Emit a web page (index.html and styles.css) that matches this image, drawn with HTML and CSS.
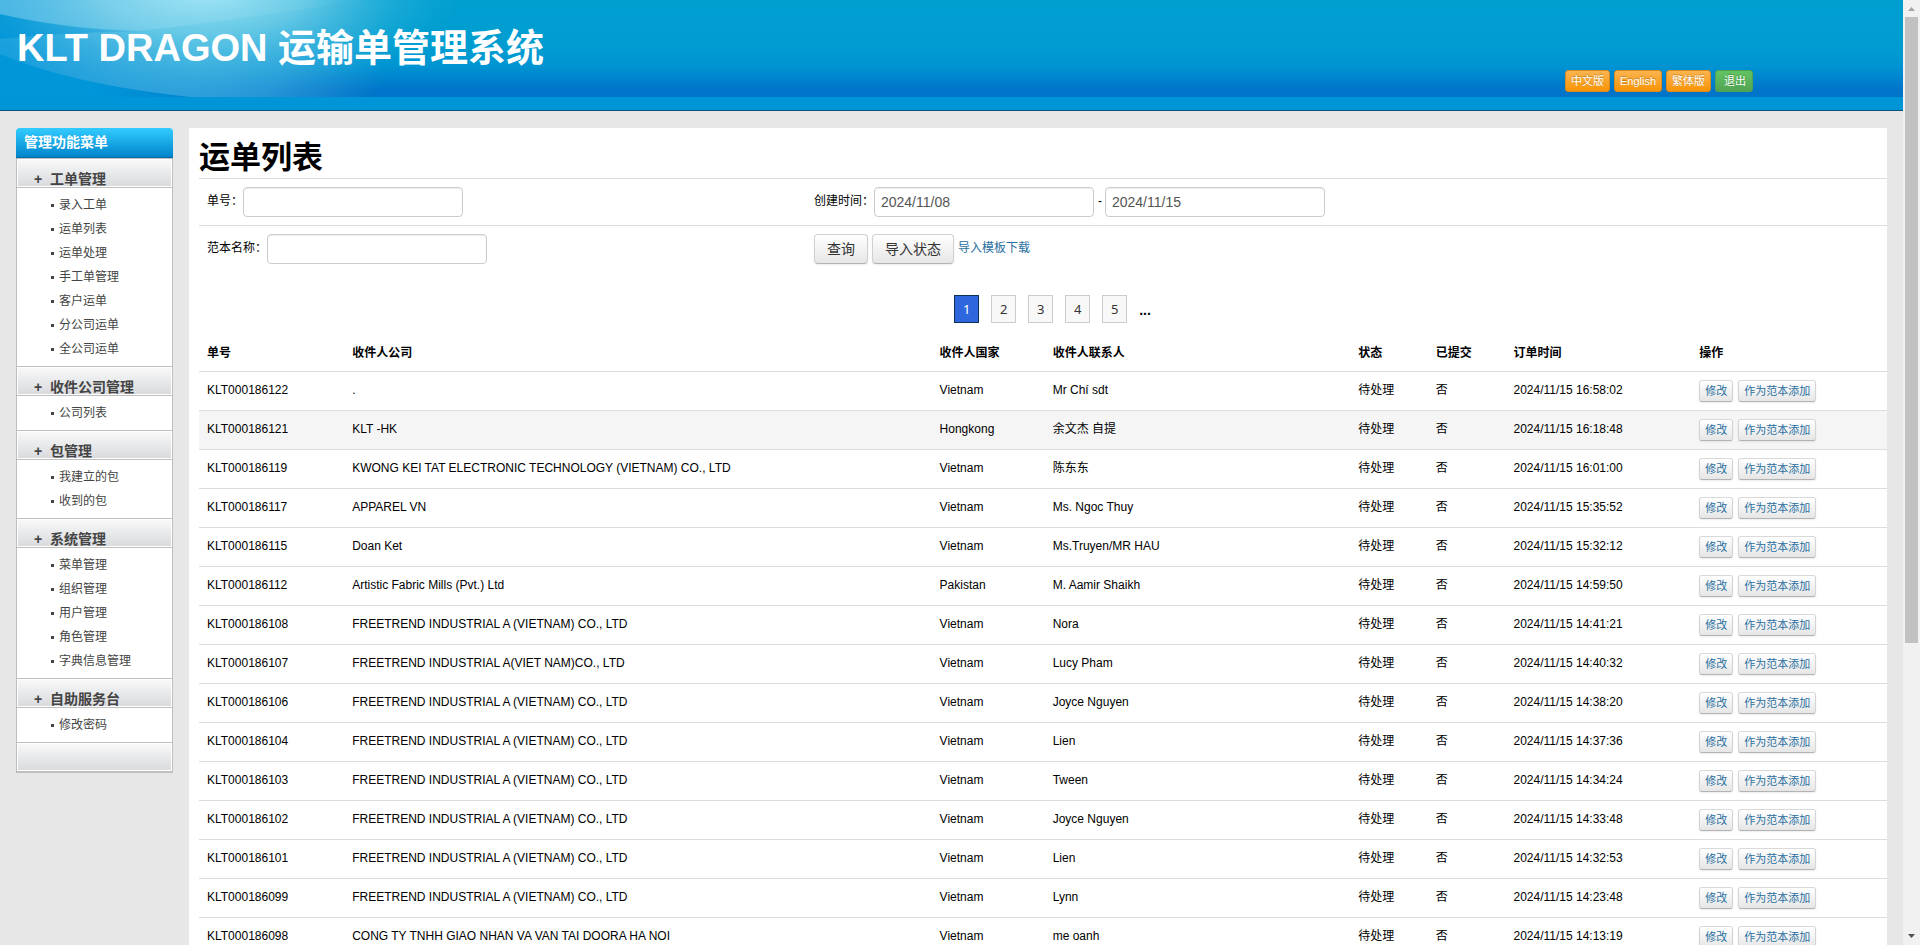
FILE: index.html
```
<!DOCTYPE html>
<html lang="zh-CN">
<head>
<meta charset="utf-8">
<title>KLT DRAGON 运输单管理系统</title>
<link rel="stylesheet" href="styles.css">
</head>
<body>
<div class="viewport">
<div class="page">
  <header class="header">
    <svg class="header-art" width="480" height="97" viewBox="0 0 480 97" aria-hidden="true">
      <defs>
        <linearGradient id="left" x1="0" y1="0" x2="1" y2="0">
          <stop offset="0" stop-color="#0096d8"/><stop offset=".3" stop-color="#0096d8"/><stop offset="1" stop-color="#0096d8" stop-opacity="0"/>
        </linearGradient>
        <radialGradient id="glow" gradientUnits="userSpaceOnUse" cx="0" cy="0" r="1" gradientTransform="translate(205 -8) scale(255 100)">
          <stop offset="0" stop-color="#a4e8f6" stop-opacity=".95"/><stop offset=".4" stop-color="#7cd6ea" stop-opacity=".75"/><stop offset="1" stop-color="#30b4dc" stop-opacity="0"/>
        </radialGradient>
        <radialGradient id="wash" gradientUnits="userSpaceOnUse" cx="0" cy="0" r="1" gradientTransform="translate(200 50) scale(190 120)">
          <stop offset="0" stop-color="#40b0de" stop-opacity=".8"/><stop offset=".5" stop-color="#38a4dc" stop-opacity=".6"/><stop offset="1" stop-color="#38a4dc" stop-opacity="0"/>
        </radialGradient>
        <linearGradient id="upper" x1="0" y1="0" x2="1" y2="0">
          <stop offset="0" stop-color="#a8dcf4" stop-opacity=".4"/><stop offset="1" stop-color="#c8f4fc" stop-opacity="0"/>
        </linearGradient>
        <linearGradient id="edge" x1="0" y1="0" x2="1" y2="0">
          <stop offset="0" stop-color="#60bcea" stop-opacity=".25"/><stop offset="1" stop-color="#60bcea" stop-opacity="0"/>
        </linearGradient>
      </defs>
      <rect width="300" height="97" fill="url(#left)"/>
      <path d="M0 0H480V97H190Q70 84 0 54Z" fill="url(#wash)"/>
      <path d="M0 39Q70 32 138 31H380V97H190Q70 84 0 54Z" fill="url(#edge)"/>
      <rect width="480" height="97" fill="url(#glow)"/>
      <path d="M0 14Q70 31 138 31Q70 32 0 39Z" fill="#008fd8" fill-opacity=".25"/>
      <path d="M0 0H360Q240 20 138 31Q60 28 0 14Z" fill="url(#upper)"/>
    </svg>
    <h1 class="brand">KLT DRAGON 运输单管理系统</h1>
    <nav class="top-actions">
      <a class="mini mini-warning" href="#">中文版</a>
      <a class="mini mini-warning" href="#">English</a>
      <a class="mini mini-warning" href="#">繁体版</a>
      <a class="mini mini-success" href="#">退出</a>
    </nav>
  </header>

  <div class="body">
    <aside class="sidebar">
      <h2 class="menu-title">管理功能菜单</h2>
      <section class="group"><h3 class="group-head"><span class="plus">+</span>工单管理</h3>
        <ul class="items"><li><a href="#">录入工单</a></li><li><a href="#">运单列表</a></li><li><a href="#">运单处理</a></li><li><a href="#">手工单管理</a></li><li><a href="#">客户运单</a></li><li><a href="#">分公司运单</a></li><li><a href="#">全公司运单</a></li></ul></section>
      <section class="group"><h3 class="group-head"><span class="plus">+</span>收件公司管理</h3>
        <ul class="items"><li><a href="#">公司列表</a></li></ul></section>
      <section class="group"><h3 class="group-head"><span class="plus">+</span>包管理</h3>
        <ul class="items"><li><a href="#">我建立的包</a></li><li><a href="#">收到的包</a></li></ul></section>
      <section class="group"><h3 class="group-head"><span class="plus">+</span>系统管理</h3>
        <ul class="items"><li><a href="#">菜单管理</a></li><li><a href="#">组织管理</a></li><li><a href="#">用户管理</a></li><li><a href="#">角色管理</a></li><li><a href="#">字典信息管理</a></li></ul></section>
      <section class="group"><h3 class="group-head"><span class="plus">+</span>自助服务台</h3>
        <ul class="items"><li><a href="#">修改密码</a></li></ul></section>
      <div class="group group-last"><div class="group-head"></div></div>
    </aside>

    <main class="content">
      <h2 class="title">运单列表</h2>
      <form class="filters">
        <div class="filter-row">
          <div class="field"><label for="no">单号：</label><input id="no" type="text"></div>
          <div class="field"><label for="from">创建时间：</label><input id="from" type="text" value="2024/11/08"><label class="dash" for="to">-</label><input id="to" type="text" value="2024/11/15"></div>
        </div>
        <div class="filter-row">
          <div class="field"><label for="tpl">范本名称：</label><input id="tpl" type="text"></div>
          <div class="field actions"><button class="btn" type="button">查询</button><button class="btn" type="button">导入状态</button><a class="link" href="#">导入模板下载</a></div>
        </div>
      </form>
      <nav class="pager"><a class="page-no current" href="#">1</a><a class="page-no" href="#">2</a><a class="page-no" href="#">3</a><a class="page-no" href="#">4</a><a class="page-no" href="#">5</a><span class="more">...</span></nav>
      <table class="orders">
        <colgroup><col class="c-no"><col class="c-company"><col class="c-country"><col class="c-contact"><col class="c-state"><col class="c-sent"><col class="c-time"><col class="c-ops"></colgroup>
        <thead><tr><th>单号</th><th>收件人公司</th><th>收件人国家</th><th>收件人联系人</th><th>状态</th><th>已提交</th><th>订单时间</th><th>操作</th></tr></thead>
        <tbody id="rows"></tbody>
      </table>
    </main>
  </div>
</div>
<div class="scrollbar" aria-hidden="true">
  <svg class="arrow" width="17" height="17" viewBox="0 0 17 17"><path d="M5 11h7L8.500 7Z" fill="#a3a3a3"/></svg>
  <div class="track"><div class="thumb"></div></div>
  <svg class="arrow" width="17" height="17" viewBox="0 0 17 17"><path d="M5 6h7L8.500 10Z" fill="#505050"/></svg>
</div>
</div>
<script src="app.js"></script>
</body>
</html>
```

FILE: app.js
```
const orders = [
  ["KLT000186122", ".", "Vietnam", "Mr Chí sdt", "16:58:02"],
  ["KLT000186121", "KLT -HK", "Hongkong", "余文杰 自提", "16:18:48"],
  ["KLT000186119", "KWONG KEI TAT ELECTRONIC TECHNOLOGY (VIETNAM) CO., LTD", "Vietnam", "陈东东", "16:01:00"],
  ["KLT000186117", "APPAREL VN", "Vietnam", "Ms. Ngoc Thuy", "15:35:52"],
  ["KLT000186115", "Doan Ket", "Vietnam", "Ms.Truyen/MR HAU", "15:32:12"],
  ["KLT000186112", "Artistic Fabric Mills (Pvt.) Ltd", "Pakistan", "M. Aamir Shaikh", "14:59:50"],
  ["KLT000186108", "FREETREND INDUSTRIAL A (VIETNAM) CO., LTD", "Vietnam", "Nora", "14:41:21"],
  ["KLT000186107", "FREETREND INDUSTRIAL A(VIET NAM)CO., LTD", "Vietnam", "Lucy Pham", "14:40:32"],
  ["KLT000186106", "FREETREND INDUSTRIAL A (VIETNAM) CO., LTD", "Vietnam", "Joyce Nguyen", "14:38:20"],
  ["KLT000186104", "FREETREND INDUSTRIAL A (VIETNAM) CO., LTD", "Vietnam", "Lien", "14:37:36"],
  ["KLT000186103", "FREETREND INDUSTRIAL A (VIETNAM) CO., LTD", "Vietnam", "Tween", "14:34:24"],
  ["KLT000186102", "FREETREND INDUSTRIAL A (VIETNAM) CO., LTD", "Vietnam", "Joyce Nguyen", "14:33:48"],
  ["KLT000186101", "FREETREND INDUSTRIAL A (VIETNAM) CO., LTD", "Vietnam", "Lien", "14:32:53"],
  ["KLT000186099", "FREETREND INDUSTRIAL A (VIETNAM) CO., LTD", "Vietnam", "Lynn", "14:23:48"],
  ["KLT000186098", "CONG TY TNHH GIAO NHAN VA VAN TAI DOORA HA NOI", "Vietnam", "me oanh", "14:13:19"]
];
const body = document.getElementById("rows");
orders.forEach(([no, company, country, contact, time], i) => {
  const tr = body.insertRow();
  if (i === 1) tr.className = "hover";
  [no, company, country, contact, "待处理", "否", "2024/11/15 " + time].forEach(t => {
    tr.insertCell().textContent = t;
  });
  const ops = document.createElement("div");
  ops.className = "ops";
  ["修改", "作为范本添加"].forEach(t => {
    const a = document.createElement("a");
    a.href = "#";
    a.className = "mini mini-plain";
    a.textContent = t;
    ops.append(a);
  });
  tr.insertCell().append(ops);
});
```

FILE: styles.css
```
* { box-sizing: border-box; }
body {
  margin: 0;
  background: #e7e7e7;
  color: #000;
  font: 12px/20px "Liberation Sans", Arial, "Noto Sans CJK SC", sans-serif;
}
h1, h2, h3, ul { margin: 0; padding: 0; }
a { color: #2a6fa0; text-decoration: none; }

.viewport { display: flex; height: 100vh; overflow: hidden; }
.page { flex: 1; min-width: 0; overflow: hidden; }

.header {
  position: relative;
  display: flex;
  justify-content: space-between;
  align-items: flex-start;
  height: 111px;
  padding: 0 150px 0 17px;
  border-bottom: 1px solid #0a5078;
  background: linear-gradient(#009fd0 0, #009cd1 50px, #0094d2 66px, #0074c9 90px, #0074c9 97px, #0095d6 97px);
}
.header-art { position: absolute; left: 0; top: 0; }
.brand {
  position: relative;
  padding-top: 28px;
  color: #fff;
  font-size: 38px;
  line-height: 40px;
}
.top-actions { position: relative; display: flex; gap: 4px; padding-top: 70px; }

.mini {
  display: block;
  height: 22px;
  padding: 0 5px;
  border: 1px solid #ccc;
  border-radius: 3px;
  font-size: 11px;
  line-height: 21px;
  white-space: nowrap;
}
.mini-warning {
  border-color: #d98a1c;
  background: linear-gradient(#fbb450, #f89406);
  color: #fff;
  text-shadow: 0 -1px 0 rgba(0, 0, 0, .25);
}
.mini-success {
  padding: 0 6px 0 8px;
  border-color: #51a351;
  background: linear-gradient(#62c462, #51a351);
  color: #fff;
  text-shadow: 0 -1px 0 rgba(0, 0, 0, .25);
}
.mini-plain {
  border-color: #d9d9d9 #d4d4d4 #b3b3b3;
  background: linear-gradient(#fff, #e6e6e6);
  box-shadow: 0 1px 2px rgba(0, 0, 0, .08);
}

.body { display: flex; align-items: flex-start; gap: 16px; padding: 17px 16px 0; }

.sidebar { flex: none; width: 157px; }
.menu-title {
  height: 30px;
  padding-left: 8px;
  border-bottom: 1px solid #0a6ba0;
  border-radius: 4px 4px 0 0;
  background: linear-gradient(#33ccff, #0084cc);
  color: #fff;
  font-size: 14px;
  line-height: 29px;
}
.group { border: 1px solid #bfbfbf; border-bottom: 0; background: #fff; }
.group-head {
  display: flex;
  height: 28px;
  padding: 10px 0 0 16px;
  border: 1px solid #fff;
  box-shadow: 0 1px 0 #bfbfbf;
  background: linear-gradient(#f8f8f8, #d9dbde);
  color: #444;
  font-size: 14px;
  line-height: 18px;
}
.plus { width: 16px; }
.items { padding: 6px 0 5px 34px; list-style: none; }
.items li { display: flex; align-items: center; gap: 5px; height: 24px; }
.items li::before { content: ""; width: 3px; height: 3px; background: #444; }
.items a { color: #444; }
.group-last { border-bottom: 2px solid #bfbfbf; }

.content { flex: 1; min-width: 0; padding: 10px 0 0 10px; background: #fff; }
.title { font-size: 31px; line-height: 40px; }
.filter-row { display: flex; padding: 8px; border-top: 1px solid #ddd; }
.field { display: flex; align-items: flex-start; line-height: 28px; }
.field:first-child { flex: 0 0 36.3%; }
.field input {
  width: 220px;
  height: 30px;
  padding: 4px 6px;
  border: 1px solid #ccc;
  border-radius: 4px;
  box-shadow: inset 0 1px 1px rgba(0, 0, 0, .075);
  color: #555;
  font: 14px/20px "Liberation Sans", Arial, sans-serif;
}
.dash { padding: 0 3px 0 4px; }
.actions { gap: 4px; }
.btn {
  height: 30px;
  padding: 0 12px;
  border: 1px solid #d0d0d0;
  border-bottom-color: #b3b3b3;
  border-radius: 4px;
  background: linear-gradient(#fff, #e6e6e6);
  box-shadow: 0 1px 2px rgba(0, 0, 0, .08);
  color: #333;
  font: 14px/20px "Liberation Sans", "Noto Sans CJK SC", sans-serif;
}

.pager { display: flex; justify-content: center; gap: 12px; padding: 23px 0 10px 19px; }
.page-no {
  width: 25px;
  height: 28px;
  border: 1px solid #ccc;
  background: #f8f8f8;
  color: #333;
  font: 13px/27px "Noto Sans", sans-serif;
  text-align: center;
}
.current { border-color: #0e2f56; background: #2e66dd; color: #fff; }
.more { font-size: 14px; font-weight: bold; line-height: 30px; }

.orders { width: 100%; border-collapse: collapse; table-layout: fixed; }
.orders th, .orders td { padding: 8px; text-align: left; vertical-align: top; }
.orders td { border-top: 1px solid #ddd; white-space: nowrap; }
.hover { background: #f5f5f5; }
.ops { display: flex; gap: 5px; }
.c-no { width: 8.6%; }
.c-company { width: 34.8%; }
.c-country { width: 6.7%; }
.c-contact { width: 18.1%; }
.c-state { width: 4.6%; }
.c-sent { width: 4.6%; }
.c-time { width: 11%; }
.c-ops { width: 11.6%; }

.scrollbar { display: flex; flex: none; flex-direction: column; width: 17px; background: #f1f1f1; }
.arrow { display: block; flex: none; }
.track { flex: 1; padding: 0 2px; }
.thumb { height: 68.7%; background: #c1c1c1; }
```
